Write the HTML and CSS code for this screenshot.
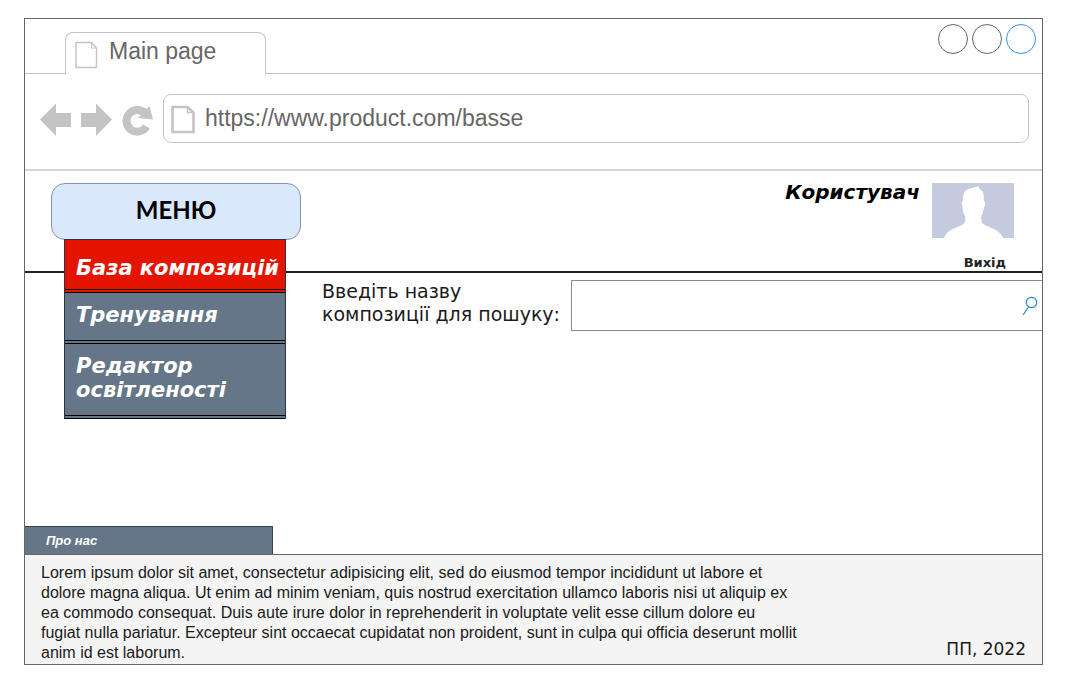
FILE: index.html
```html
<!DOCTYPE html>
<html lang="uk">
<head>
<meta charset="utf-8">
<title>Main page</title>
<link rel="stylesheet" href="styles.css">
</head>
<body>
<div class="window">
  <div class="tabbar">
    <div class="tab">
      <svg class="tab-icon" width="23" height="28" viewBox="0 0 23 28" fill="none" stroke="#c4c4c4" stroke-width="1.4"><path d="M1 1.500H16.500L21.500 7V26.500H1Z"/><path d="M16.500 1.500V7H21.500" stroke-width="1"/></svg>
      <span>Main page</span>
    </div>
    <div class="controls">
      <button class="control" type="button" aria-label="Minimize"></button>
      <button class="control" type="button" aria-label="Maximize"></button>
      <button class="control control-close" type="button" aria-label="Close"></button>
    </div>
  </div>
  <div class="toolbar">
    <button class="tool" type="button" aria-label="Back"><svg width="32" height="34" viewBox="0 0 32 34"><path fill="#c4c4c4" d="M0 17.500L16 1.500V11H31V25H16V34Z"/></svg></button>
    <button class="tool" type="button" aria-label="Forward"><svg width="32" height="34" viewBox="0 0 32 34"><path fill="#c4c4c4" d="M31 17.500L15 1.500V11H0V25H15V34Z"/></svg></button>
    <button class="tool" type="button" aria-label="Reload"><svg width="32" height="34" viewBox="0 0 32 34"><path fill="none" stroke="#c4c4c4" stroke-width="8" d="M24.500 24.500A10.800 10.800 0 1 1 22.500 10.800"/><path fill="#c4c4c4" d="M27.500 4L31 17.500L16 16Z"/></svg></button>
    <div class="address">
      <svg width="24" height="30" viewBox="0 0 24 30" fill="none" stroke="#c4c4c4"><path stroke-width="2.600" d="M1.500 3H16.500L22.500 8.500V28H1.500Z"/><path stroke-width="1.500" d="M16.500 3V8.500H22.500"/></svg>
      <input class="address-input" type="text" aria-label="Address" value="https://www.product.com/basse">
    </div>
  </div>
  <header class="header">
    <nav class="menu">
      <button class="menu-button" type="button">МЕНЮ</button>
      <div class="menu-list">
        <a class="menu-item menu-item-active" href="#base">База композицій</a>
        <a class="menu-item" href="#training">Тренування</a>
        <a class="menu-item" href="#editor">Редактор освітленості</a>
      </div>
    </nav>
    <div class="user">
      <span class="user-name">Користувач</span>
      <div class="user-card">
        <svg class="avatar" width="82" height="55" viewBox="0 0 82 55"><rect width="82" height="55" fill="#c5cbdf"/><path fill="#fff" d="M12 55C15 48 20 46 28 43C33 41 34 38 33 33C31 30 31 27 30.500 24C29 20 30 18 31 18C30 9 34 6 40 5C44 4 46 3 47 3C46 5 48 6 49 7C52 9 52 13 52 18C54 19 53 23 52 25C51 29 50 32 49 34C49 39 50 41 55 43C62 46 68 48 71 55Z"/></svg>
        <a class="logout" href="#logout">Вихід</a>
      </div>
    </div>
  </header>
  <main class="content">
    <form class="search">
      <label class="search-label" for="query">Введіть назву<br>композиції для пошуку:</label>
      <div class="search-box">
        <input class="search-input" id="query" type="text">
        <button class="search-button" type="button" aria-label="Пошук"><svg width="16" height="20" viewBox="0 0 16 20" fill="none" stroke="#1e88d2" stroke-width="1.200"><circle cx="9.500" cy="6.500" r="5.200"/><path d="M6.500 11L1 19"/></svg></button>
      </div>
    </form>
  </main>
  <a class="about" href="#about">Про нас</a>
  <footer class="footer">
    <p class="footer-text">Lorem ipsum dolor sit amet, consectetur adipisicing elit, sed do eiusmod tempor incididunt ut labore et<br>dolore magna aliqua. Ut enim ad minim veniam, quis nostrud exercitation ullamco laboris nisi ut aliquip ex<br>ea commodo consequat. Duis aute irure dolor in reprehenderit in voluptate velit esse cillum dolore eu<br>fugiat nulla pariatur. Excepteur sint occaecat cupidatat non proident, sunt in culpa qui officia deserunt mollit<br>anim id est laborum.</p>
    <span class="copyright">ПП, 2022</span>
  </footer>
</div>
</body>
</html>
```
FILE: styles.css
```css
* {
  box-sizing: border-box;
}

body {
  margin: 0;
  min-height: 100vh;
  display: flex;
  padding: 18px 30px 12px 24px;
  background: #fff;
  color: #1a1a1a;
  font-family: "DejaVu Sans", Verdana, sans-serif;
}

button {
  padding: 0;
  border: 0;
  background: none;
  cursor: pointer;
}

a {
  text-decoration: none;
}

svg {
  display: block;
  flex: none;
}

.window {
  flex: 1;
  display: flex;
  flex-direction: column;
  border: 1px solid #666;
}

.tabbar {
  display: flex;
  justify-content: space-between;
  align-items: flex-end;
  height: 55px;
  border-bottom: 1px solid #c4c4c4;
}

.tab {
  display: flex;
  align-items: center;
  gap: 11px;
  width: 201px;
  height: 42px;
  margin: 0 0 -1px 40px;
  padding: 0 9px 4px;
  border: 1px solid #c4c4c4;
  border-bottom: 0;
  border-radius: 8px 8px 0 0;
  background: #fff;
  color: #666;
  font: 23px "Liberation Sans", Arial, sans-serif;
}

.tab-icon {
  margin-top: 6px;
}

.controls {
  display: flex;
  gap: 4px;
  align-self: flex-start;
  padding: 5px 6px 0 0;
}

.control {
  width: 30px;
  height: 30px;
  border: 1px solid #666;
  border-radius: 50%;
}

.control-close {
  border-color: #2e96e0;
}

.toolbar {
  display: flex;
  align-items: center;
  gap: 9px;
  height: 97px;
  padding: 0 13px 6px 15px;
  border-bottom: 2px solid #d4d4d4;
}

.address {
  flex: 1;
  display: flex;
  align-items: center;
  gap: 10px;
  height: 49px;
  padding: 0 8px 0 7px;
  border: 1px solid #c4c4c4;
  border-radius: 8px;
}

.address-input {
  flex: 1;
  min-width: 0;
  padding: 0;
  border: 0;
  background: none;
  color: #666;
  font: 23px "Liberation Sans", Arial, sans-serif;
}

.header {
  display: flex;
  justify-content: space-between;
  height: 102px;
  padding: 12px 28px 0 26px;
  border-bottom: 2px solid #222;
}

.menu {
  position: relative;
  width: 250px;
}

.menu-button {
  width: 100%;
  height: 57px;
  padding-bottom: 4px;
  border: 1px solid #7d95bd;
  border-radius: 14px;
  background: #dae8fc;
  color: #000;
  font: bold 24px Lato, sans-serif;
}

.menu-list {
  position: absolute;
  top: 56px;
  left: 13px;
  width: 222px;
  border: 1px solid #2b3440;
  border-bottom: 0;
}

.menu-item {
  display: block;
  padding: 10px 4px 13px 11px;
  border-bottom: 4px double #000;
  background: #647687;
  color: #fff;
  font: italic bold 21px/24px "DejaVu Sans", Verdana, sans-serif;
}

.menu-item-active {
  padding-top: 16px;
  padding-bottom: 9px;
  background: #e51400;
  white-space: nowrap;
}

.user {
  display: flex;
  gap: 12px;
}

.user-name {
  color: #000;
  font: italic bold 20px/18px "DejaVu Sans", Verdana, sans-serif;
}

.user-card {
  display: flex;
  flex-direction: column;
  justify-content: space-between;
}

.logout {
  padding-right: 8px;
  text-align: right;
  color: #222;
  font: bold 13px/16px "DejaVu Sans", Verdana, sans-serif;
}

.content {
  flex: 1;
  padding: 7px 0 0 297px;
}

.search {
  display: flex;
  gap: 7px;
}

.search-label {
  width: 242px;
  white-space: nowrap;
  font-size: 19px;
  line-height: 23px;
}

.search-box {
  flex: 1;
  display: flex;
  align-items: center;
  height: 51px;
  padding-right: 4px;
  border: 1px solid #888;
  border-right: 0;
}

.search-input {
  flex: 1;
  min-width: 0;
  height: 100%;
  padding: 0 12px;
  border: 0;
  background: none;
  font: 18px "DejaVu Sans", Verdana, sans-serif;
}

.about {
  width: 248px;
  padding: 0 21px;
  border: 1px solid #314354;
  border-width: 1px 1px 0 0;
  background: #647687;
  color: #fff;
  font: italic bold 13px/27px "Liberation Sans", Arial, sans-serif;
}

.footer {
  display: flex;
  justify-content: space-between;
  align-items: flex-end;
  padding: 8px 16px 1px;
  border-top: 1px solid #666;
  background: #f4f4f4;
}

.footer-text {
  margin: 0;
  font: 16px/20px "Liberation Sans", Arial, sans-serif;
}

.copyright {
  font-size: 17px;
  line-height: 27px;
}
```
